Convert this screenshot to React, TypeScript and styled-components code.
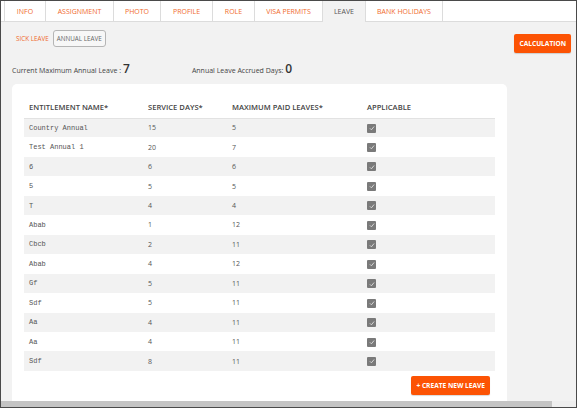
import React from 'react';
import styled, { createGlobalStyle } from 'styled-components';

const GlobalStyle = createGlobalStyle`
  html, body {
    margin: 0;
    padding: 0;
    background: #ffffff;
  }
  * {
    box-sizing: border-box;
  }
`;

const Frame = styled.div`
  width: 577px;
  height: 408px;
  border: 1px solid #4a4a4a;
  display: flex;
  flex-direction: column;
  overflow: hidden;
  font-family: 'Open Sans', 'Noto Sans', sans-serif;
  background: #f2f2f2;
`;

const TabBar = styled.div`
  height: 21px;
  flex: none;
  display: flex;
  background: #ffffff;
  border-bottom: 1px solid #dcdcdc;
  padding-left: 3px;
`;

const Tab = styled.div<{ $active?: boolean; $w: number }>`
  width: ${(p) => p.$w}px;
  display: flex;
  align-items: center;
  justify-content: center;
  border-left: 1px solid #dcdcdc;
  font-size: 7px;
  color: ${(p) => (p.$active ? '#555555' : '#f06a2c')};
  background: ${(p) => (p.$active ? '#f2f2f2' : '#ffffff')};
  margin-bottom: ${(p) => (p.$active ? '-1px' : '0')};
  &:last-child {
    border-right: 1px solid #dcdcdc;
  }
`;

const Content = styled.div`
  flex: 1;
  min-height: 0;
  display: flex;
  flex-direction: column;
  padding: 8px 5px 0 11px;
  overflow: hidden;
`;

const TopRow = styled.div`
  display: flex;
  justify-content: space-between;
  align-items: flex-start;
`;

const SubTabs = styled.div`
  display: flex;
  align-items: center;
  gap: 4px;
  padding-left: 4px;
`;

const SubTab = styled.div<{ $active?: boolean }>`
  height: 17px;
  display: flex;
  align-items: center;
  padding: 0 ${(p) => (p.$active ? '3px' : '0')};
  font-size: 6.3px;
  color: ${(p) => (p.$active ? '#666666' : '#f06a2c')};
  background: ${(p) => (p.$active ? '#f7f7f7' : 'transparent')};
  border: ${(p) => (p.$active ? '1px solid #b5b5b5' : 'none')};
  border-radius: 3px;
`;

const OrangeButton = styled.button<{ $mt?: number }>`
  height: 19px;
  margin-top: ${(p) => p.$mt ?? 0}px;
  padding: 0 5px;
  border: none;
  border-radius: 2px;
  background: #fc5304;
  color: #ffffff;
  font-family: 'Open Sans', 'Noto Sans', sans-serif;
  font-size: 6.6px;
  font-weight: 700;
  box-shadow: 0 1px 1px rgba(0, 0, 0, 0.15);
  cursor: pointer;
`;

const Stats = styled.div`
  display: flex;
  align-items: baseline;
  gap: 62px;
  margin-top: 7px;
  height: 15px;
`;

const Stat = styled.div`
  font-size: 7px;
  color: #444444;
`;

const StatValue = styled.span`
  font-size: 12px;
  font-weight: 600;
  color: #333333;
  margin-left: 2px;
`;

const Card = styled.div`
  margin-top: 9px;
  width: 495px;
  flex: 1;
  background: #ffffff;
  border-radius: 5px 5px 0 0;
  padding: 12px 12px 0 12px;
  display: flex;
  flex-direction: column;
`;

const Table = styled.table`
  width: 471px;
  border-collapse: collapse;
  table-layout: fixed;
`;

const HeadCell = styled.th`
  height: 22px;
  padding: 0 0 0 5px;
  text-align: left;
  font-size: 7.6px;
  font-weight: 600;
  color: #444444;
  border-bottom: 1px solid #e2e2e2;
`;

const Row = styled.tr<{ $shade: boolean }>`
  height: 19.46px;
  background: ${(p) => (p.$shade ? '#f2f2f2' : '#ffffff')};
`;

const Cell = styled.td<{ $mono?: boolean }>`
  padding: 0 0 0 5px;
  font-family: ${(p) =>
    p.$mono ? "'Liberation Mono', 'DejaVu Sans Mono', monospace" : "'Open Sans', 'Noto Sans', sans-serif"};
  font-size: 7px;
  color: #555555;
  white-space: nowrap;
`;

const Check = styled.span`
  display: inline-flex;
  align-items: center;
  justify-content: center;
  width: 9px;
  height: 9px;
  border-radius: 1px;
  background: #7a7a7a;
  vertical-align: middle;
`;

const Footer = styled.div`
  display: flex;
  justify-content: flex-end;
  padding: 5px 5px 0 0;
`;

const Scrollbar = styled.div`
  height: 6px;
  flex: none;
  display: flex;
  background: #eeeeee;
`;

const ScrollThumb = styled.div`
  width: 551px;
  background: #c4c4c4;
`;

const rows = [
  { name: 'Country Annual', service: '15', max: '5' },
  { name: 'Test Annual 1', service: '20', max: '7' },
  { name: '6', service: '6', max: '6' },
  { name: '5', service: '5', max: '5' },
  { name: 'T', service: '4', max: '4' },
  { name: 'Abab', service: '1', max: '12' },
  { name: 'Cbcb', service: '2', max: '11' },
  { name: 'Abab', service: '4', max: '12' },
  { name: 'Gf', service: '5', max: '11' },
  { name: 'Sdf', service: '5', max: '11' },
  { name: 'Aa', service: '4', max: '11' },
  { name: 'Aa', service: '4', max: '11' },
  { name: 'Sdf', service: '8', max: '11' },
];

const tabs = [
  { label: 'INFO', w: 41 },
  { label: 'ASSIGNMENT', w: 68 },
  { label: 'PHOTO', w: 47 },
  { label: 'PROFILE', w: 52 },
  { label: 'ROLE', w: 42 },
  { label: 'VISA PERMITS', w: 68 },
  { label: 'LEAVE', w: 43 },
  { label: 'BANK HOLIDAYS', w: 78 },
];

const CheckIcon = () => (
  <svg width="6" height="6" viewBox="0 0 10 10">
    <path d="M1.5 5.5 L4 8 L8.5 2.5" fill="none" stroke="#e6e6e6" strokeWidth="1.4" />
  </svg>
);

const App: React.FC = () => {
  return (
    <>
      <GlobalStyle />
      <Frame>
        <TabBar>
          {tabs.map((t) => (
            <Tab key={t.label} $w={t.w} $active={t.label === 'LEAVE'}>
              {t.label}
            </Tab>
          ))}
        </TabBar>
        <Content>
          <TopRow>
            <SubTabs>
              <SubTab>SICK LEAVE</SubTab>
              <SubTab $active>ANNUAL LEAVE</SubTab>
            </SubTabs>
            <OrangeButton $mt={4}>CALCULATION</OrangeButton>
          </TopRow>
          <Stats>
            <Stat>
              Current Maximum Annual Leave :<StatValue>7</StatValue>
            </Stat>
            <Stat>
              Annual Leave Accrued Days:<StatValue>0</StatValue>
            </Stat>
          </Stats>
          <Card>
            <Table>
              <colgroup>
                <col style={{ width: 119 }} />
                <col style={{ width: 84 }} />
                <col style={{ width: 135 }} />
                <col style={{ width: 133 }} />
              </colgroup>
              <thead>
                <tr>
                  <HeadCell>ENTITLEMENT NAME*</HeadCell>
                  <HeadCell>SERVICE DAYS*</HeadCell>
                  <HeadCell>MAXIMUM PAID LEAVES*</HeadCell>
                  <HeadCell>APPLICABLE</HeadCell>
                </tr>
              </thead>
              <tbody>
                {rows.map((r, i) => (
                  <Row key={i} $shade={i % 2 === 0}>
                    <Cell $mono>{r.name}</Cell>
                    <Cell>{r.service}</Cell>
                    <Cell>{r.max}</Cell>
                    <Cell>
                      <Check>
                        <CheckIcon />
                      </Check>
                    </Cell>
                  </Row>
                ))}
              </tbody>
            </Table>
            <Footer>
              <OrangeButton>+ CREATE NEW LEAVE</OrangeButton>
            </Footer>
          </Card>
        </Content>
        <Scrollbar>
          <ScrollThumb />
        </Scrollbar>
      </Frame>
    </>
  );
};

export default App;
